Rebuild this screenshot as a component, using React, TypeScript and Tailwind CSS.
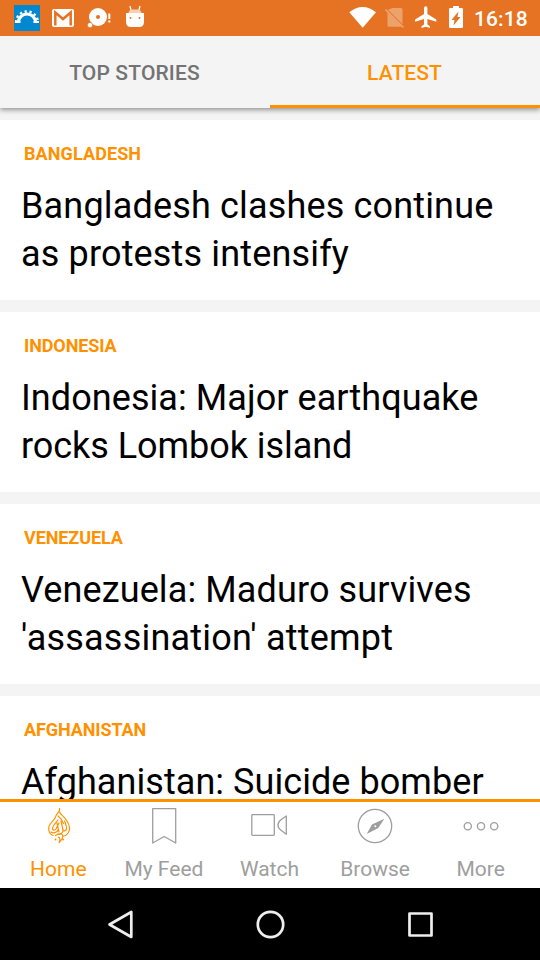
import React from 'react';

const stories = [
  {
    tag: 'BANGLADESH',
    tagStyle: 'tracking-[0.1px]',
    lines: [
      { text: 'Bangladesh clashes continue', style: 'tracking-[0.165px]' },
      { text: 'as protests intensify', style: 'tracking-[0.16px]' },
    ],
  },
  {
    tag: 'INDONESIA',
    tagStyle: 'tracking-[-0.1px]',
    lines: [
      { text: 'Indonesia: Major earthquake', style: 'tracking-[0.07px]' },
      { text: 'rocks Lombok island', style: 'tracking-[-0.05px]' },
    ],
  },
  {
    tag: 'VENEZUELA',
    tagStyle: 'tracking-[-0.1px]',
    lines: [
      { text: 'Venezuela: Maduro survives', style: 'tracking-[0.12px]' },
      { text: "'assassination' attempt", style: 'tracking-[0.22px]' },
    ],
  },
  {
    tag: 'AFGHANISTAN',
    tagStyle: 'tracking-[-0.1px]',
    lines: [{ text: 'Afghanistan: Suicide bomber', style: 'tracking-[0.06px]' }],
  },
];

function StatusBar() {
  return (
    <div className="relative z-20 flex h-9 shrink-0 items-center bg-[#e57323] pl-[14px] pr-3 text-white">
      <svg className="h-9 w-[26px]" viewBox="14 0 26 36">
        <path fill="#0288d1" d="M14 5h26v26H14z" />
        <g fill="none" stroke="#fff">
          <path strokeWidth="3.200" d="M18.500 22.500a8.500 8.500 0 0 1 17 0" />
          <path strokeWidth="2.400" strokeDasharray="2.300 2.600" d="M16 22.500a11 11 0 0 1 22 0" />
        </g>
        <path fill="#fff" d="M15 21h5.500v2H15zM33.500 21H39v2h-5.500z" />
      </svg>
      <svg className="ml-3 h-9 w-[22px]" viewBox="52 0 22 36">
        <rect x="52" y="9" width="22" height="18" rx="2" fill="#fff" />
        <path fill="none" stroke="#e57323" strokeWidth="2.500" d="M55.300 25.500V12.500L63 19l7.700-6.500v13" />
      </svg>
      <svg className="ml-[13px] h-9 w-6" viewBox="87 0 24 36">
        <circle cx="98" cy="17" r="9" fill="#fff" />
        <circle cx="98" cy="17" r="2" fill="#e57323" />
        <circle cx="90" cy="25" r="2.600" fill="#fff" stroke="#e57323" strokeWidth=".7" />
        <path fill="#fff" d="M108.300 13.500h2v5.500h-2zM108.300 20.500h2v2h-2z" />
      </svg>
      <svg className="ml-[15px] h-9 w-[18px]" viewBox="126 0 18 36">
        <path fill="#fff" d="M126 13h18v9q0 5-5 5h-8q-5 0-5-5z" />
        <path fill="#f8cfb2" d="M128.500 13q.5-3.500 4-3.500h5q3.500 0 4 3.500z" />
        <path stroke="#fff" strokeWidth="1.300" d="m130 6 1 4m9-4-1 4" />
        <circle cx="130.500" cy="18" r="1" fill="#e57323" />
        <circle cx="139.500" cy="18" r="1" fill="#e57323" />
      </svg>
      <svg className="ml-auto h-9 w-7" viewBox="349 0 28 36">
        <path fill="#fff" d="M349.300 12.300Q362.700 1.800 376 12.300L362.700 27.800z" />
      </svg>
      <svg className="ml-2 h-9 w-5" viewBox="385 0 20 36">
        <path fill="#fff" opacity=".33" d="M392.500 8H401q1.500 0 1.500 1.500v14.800l-14.500-14.500zM387.500 12.500l14.300 14.300H389q-1.500 0-1.500-1.500z" />
        <path stroke="#f0a777" strokeWidth="1.500" d="m385.500 9.500 18 18" />
      </svg>
      <svg className="ml-[10px] h-9 w-[22px]" viewBox="415 0 22 36">
        <path fill="#fff" d="M436.300 21.800v-2.200l-8.900-5.500V8a1.700 1.700 0 0 0-3.400 0v6.100l-8.900 5.500v2.200l8.900-2.800v5.500l-2.500 1.700v1.700l4.200-1.200 4.200 1.200v-1.700l-2.500-1.700V19z" />
      </svg>
      <svg className="ml-3 h-9 w-[14px]" viewBox="449 0 14 36">
        <path fill="#fff" d="M453 6h6v2h2.700q1.300 0 1.300 1.300v17.400q0 1.300-1.300 1.300h-11.400q-1.300 0-1.300-1.300V9.300Q449 8 450.300 8h2.700z" />
        <path fill="#e57323" d="M458.500 11.500l-1 5.500h3l-7 8.500 1-5.500h-3z" />
      </svg>
      <span className="ml-[11px] w-[54px] whitespace-nowrap pt-px text-[21px] font-medium leading-9 tracking-[0.1px]">16:18</span>
    </div>
  );
}

function Tabs() {
  return (
    <div className="relative z-10 flex h-[72px] shrink-0 bg-[#f4f4f4] text-[21px] font-medium leading-[75px] shadow-[0_2px_5px_rgba(0,0,0,0.4)]">
      <div className="flex-1 pr-px text-center tracking-[0.15px] text-[#737373]">TOP STORIES</div>
      <div className="flex-1 border-b-[3px] border-[#ff9100] pr-px text-center tracking-[0.1px] text-[#ff9100]">LATEST</div>
    </div>
  );
}

function HomeLogo() {
  return (
    <svg className="h-9 w-9" viewBox="39.500 808 36 36" fill="none" stroke="#ff9100" strokeWidth="1.200" strokeLinecap="round" strokeLinejoin="round">
      <path d="M59 808.500c1 3-3 5-4 8.500-1.500 4-5.500 5.500-6.500 9.500-.8 4 .5 7.500 4 9" />
      <path d="M59 812c1 3 4.500 4 7.500 9 3.500 5.500 3.500 9 .8 12.500-1.300 1.700-2.800 2.500-4.300 2.500" />
      <path d="M57.500 816c2.500 2 4.500 4 5.500 7.500M57.500 820c-2 3-5 5-5.500 8-.3 2.500 2 3 3.500 1l3-6M60.500 821l2 9c.5 3-3 5-5.500 4M64 821c1 3 2.500 5 2 8-.5 2-3 2.500-4 1M56.500 823l2 9M50.500 832c2 1.500 6 1 7-2M55 835.500c3-2 6-2 7-.5s-.5 5-3.500 7.500c1.500-2.500 1-4.500-.5-5.500" />
      <path d="M55 839.500h.1M62.500 839.500h.1" strokeWidth="1.800" />
    </svg>
  );
}

function BottomNav() {
  return (
    <nav className="flex h-[89px] shrink-0 border-t-[3px] border-[#ff9100] bg-white pl-1.5 pr-[7px] text-[21px] leading-6 text-[#9e9e9e]">
      <div className="flex flex-1 flex-col items-center pr-px pt-1.5 text-[#ff9100]">
        <HomeLogo />
        <span className="mt-[13px]">Home</span>
      </div>
      <div className="flex flex-1 flex-col items-center pr-px pt-1.5">
        <svg className="h-9 w-9" viewBox="146 808 36 36" fill="none" stroke="currentColor" strokeWidth="1.300">
          <path strokeLinejoin="round" d="M152.700 808.700h23v34.300l-11.500-6.500-11.500 6.500z" />
        </svg>
        <span className="mt-[13px] whitespace-nowrap">My Feed</span>
      </div>
      <div className="flex flex-1 flex-col items-center pr-px pt-1.5">
        <svg className="h-9 w-9" viewBox="251 808 36 36" fill="none" stroke="currentColor" strokeWidth="1.300">
          <rect x="251.800" y="814.700" width="22.500" height="20.600" rx=".8" />
          <path strokeLinejoin="round" d="M286.300 816v18.200l-5-3.700c-1.800-1.300-3.300-2.500-3.300-5.500s1.500-4.200 3.300-5.500z" />
        </svg>
        <span className="mt-[13px]">Watch</span>
      </div>
      <div className="flex flex-1 flex-col items-center pt-1.5">
        <svg className="h-9 w-9" viewBox="357 808 36 36">
          <circle cx="375" cy="826" r="16.700" fill="none" stroke="currentColor" strokeWidth="1.300" />
          <path fill="currentColor" d="m384.300 818.700-6 9.300-11.600 6 5.300-9.600z" />
          <circle cx="375.300" cy="826.300" r="1" fill="#fff" />
        </svg>
        <span className="mt-[13px]">Browse</span>
      </div>
      <div className="flex flex-1 flex-col items-center pl-px pt-1.5">
        <svg className="h-9 w-9" viewBox="463 808 36 36" fill="none" stroke="currentColor" strokeWidth="1.300">
          <circle cx="467.800" cy="826.300" r="3.600" />
          <circle cx="481" cy="826.300" r="3.600" />
          <circle cx="494.200" cy="826.300" r="3.600" />
        </svg>
        <span className="mt-[13px]">More</span>
      </div>
    </nav>
  );
}

function SystemNav() {
  return (
    <div className="flex h-[72px] shrink-0 items-center justify-between bg-black px-[105px]">
      <svg className="h-[30px] w-[30px]" viewBox="105 909 30 30" fill="none" stroke="#eee" strokeWidth="2.700" strokeLinejoin="round">
        <path d="M131.300 912v25l-21.800-12.500z" />
      </svg>
      <svg className="h-[30px] w-[30px]" viewBox="255 909 30 30" fill="none" stroke="#eee" strokeWidth="2.700">
        <circle cx="270.500" cy="924.500" r="12.700" />
      </svg>
      <svg className="h-[30px] w-[30px]" viewBox="405 909 30 30" fill="none" stroke="#eee" strokeWidth="2.700" strokeLinejoin="round">
        <path d="M409.500 913.500h22v22h-22z" />
      </svg>
    </div>
  );
}

export default function App() {
  return (
    <div className="flex h-[960px] w-[540px] flex-col overflow-hidden bg-[#f4f4f4] font-['Roboto',sans-serif]">
      <StatusBar />
      <Tabs />
      <main className="flex min-h-0 flex-1 flex-col gap-3 overflow-hidden pt-3">
        {stories.map((s) => (
          <article key={s.tag} className="h-[180px] shrink-0 bg-white pt-[22px]">
            <div className={`pl-6 text-[18px] font-bold leading-6 text-[#ff9100] ${s.tagStyle}`}>{s.tag}</div>
            <h2 className="mt-4 whitespace-nowrap pl-[21px] text-[36px] leading-[48px] text-black">
              {s.lines.map((l) => (
                <span key={l.text} className={`block ${l.style}`}>{l.text}</span>
              ))}
            </h2>
          </article>
        ))}
      </main>
      <BottomNav />
      <SystemNav />
    </div>
  );
}
